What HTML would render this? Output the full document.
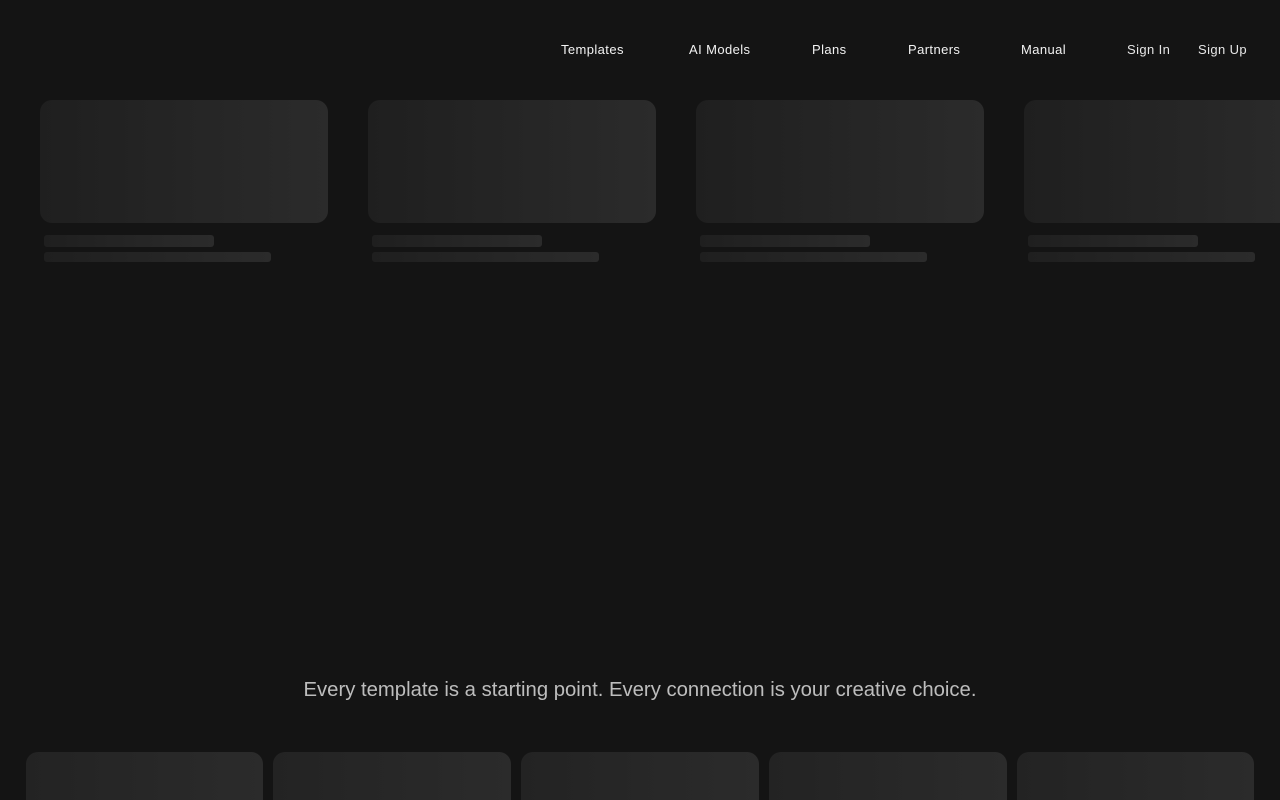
<!DOCTYPE html>
<html><head><meta charset="utf-8"><style>
html,body{margin:0;padding:0;background:#141414;width:1280px;height:800px;overflow:hidden;font-family:"Liberation Sans",sans-serif;position:relative;}
.nav a{position:absolute;top:42px;color:#f2f2f2;font-size:13px;letter-spacing:0.4px;text-decoration:none;line-height:16px;}
.card{position:absolute;top:100px;width:288px;height:123px;border-radius:12px;background:linear-gradient(90deg,#1f1f1f,#2b2b2b);}
.b1{position:absolute;top:235px;width:170px;height:12px;border-radius:3px;background:linear-gradient(90deg,#1f1f1f,#2b2b2b);}
.b2{position:absolute;top:252px;width:227px;height:10px;border-radius:3px;background:linear-gradient(90deg,#1f1f1f,#2b2b2b);}
.bc{position:absolute;top:752px;height:48px;border-radius:12px 12px 0 0;background:linear-gradient(90deg,#232323,#2b2b2b);}
.tag{position:absolute;top:677px;left:0;width:1280px;text-align:center;color:#bdbdbd;font-size:20.3px;line-height:26px;}
</style></head><body>
<div class="nav">
<a style="left:561px">Templates</a>
<a style="left:689px">AI Models</a>
<a style="left:812px">Plans</a>
<a style="left:908px">Partners</a>
<a style="left:1021px">Manual</a>
<a style="left:1127px;color:#e6e6e6">Sign In</a>
<a style="left:1198px;color:#e6e6e6">Sign Up</a>
</div>
<div class="card" style="left:40px"></div><div class="b1" style="left:44px"></div><div class="b2" style="left:44px"></div>
<div class="card" style="left:368px"></div><div class="b1" style="left:372px"></div><div class="b2" style="left:372px"></div>
<div class="card" style="left:696px"></div><div class="b1" style="left:700px"></div><div class="b2" style="left:700px"></div>
<div class="card" style="left:1024px"></div><div class="b1" style="left:1028px"></div><div class="b2" style="left:1028px"></div>
<div class="tag">Every template is a starting point. Every connection is your creative choice.</div>
<div class="bc" style="left:26px;width:237px"></div>
<div class="bc" style="left:273px;width:238px"></div>
<div class="bc" style="left:521px;width:238px"></div>
<div class="bc" style="left:769px;width:238px"></div>
<div class="bc" style="left:1017px;width:237px"></div>
</body></html>
